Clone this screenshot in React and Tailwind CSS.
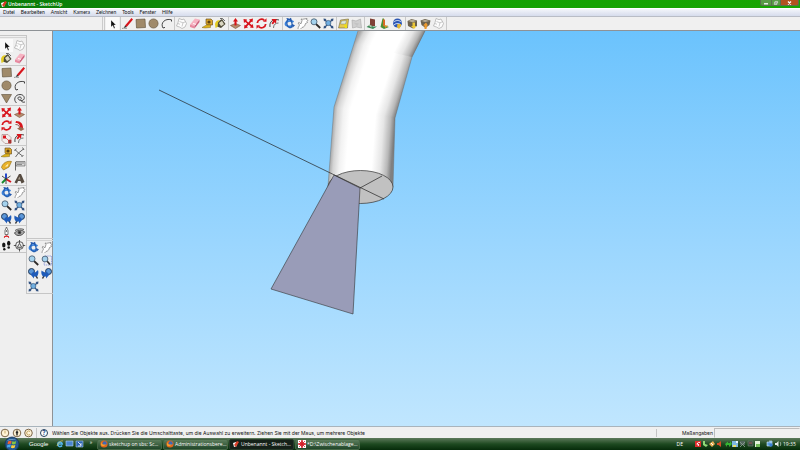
const TAN = "#a08a6a";
const RED = "#d8151c";

// every glyph is drawn on a 13 x 13 grid
const glyphs = {
  select: <path d="M5 3v7l1.700-1.500L8 11.500l1.100-.5-1.300-3H10z" fill="#111" stroke="#fff" strokeWidth=".3" />,
  component: (
    <g fill="#fcfcfc" stroke="#a9a9a9" strokeWidth=".7">
      <path d="M4 1.500l3 1.200L9 2l2.500 4.500L10 10l-3 1.500L4.500 10l-3-1L3 5.500z" />
      <path d="M4.500 4.500L8 5.800 7 9.500M8 5.800l2.500-1M3 6.500l2 .8" fill="none" strokeWidth=".6" />
    </g>
  ),
  eraser: (
    <g>
      <path d="M2 7.500L7 1.500l4.500 1L6.500 9z" fill="#f7b3c2" />
      <path d="M2 7.500L6.500 9v2.500L2 10z" fill="#e88aa0" />
      <path d="M6.500 9l5-6.500V5l-5 6.500z" fill="#cf5f7c" />
      <path d="M5 6.500l3 .8" stroke="#fff" strokeWidth=".9" />
    </g>
  ),
  paint: (
    <g>
      <path d="M3.500 5L8 2l3.500 5-4.500 4-4-1.500z" fill="#4d4a38" />
      <path d="M5 6l3-2.200 2 3.400-3 2z" fill="#dcd8c4" />
      <path d="M1 7c.5-3 3-4.500 5-3.500L4 5.500 3.500 10 1.500 11z" fill="#e3cb22" />
      <path d="M6 1.500h2.500L11 4" fill="none" stroke="#333" strokeWidth=".7" />
    </g>
  ),
  rect: <path d="M2 2.500l9-.5.5 8.500-9 .5z" fill={TAN} stroke="#5b4d38" strokeWidth=".6" />,
  pencil: (
    <g>
      <path d="M4 8.500L10.500 1 12 2.500 5.700 10z" fill={RED} />
      <path d="M4 8.500L5.700 10 3 11z" fill="#222" />
      <path d="M1 11.500c2-1 3 .5 5-.3" stroke="#555" strokeWidth=".6" fill="none" />
    </g>
  ),
  circle: <circle cx="6.500" cy="6.500" r="4.600" fill={TAN} stroke="#5b4d38" strokeWidth=".6" />,
  arc: <path d="M3 11C0 6 5 1 11.500 2.800M3 11l2-.6M11.500 2.800V4.500" fill="none" stroke="#333" strokeWidth=".9" />,
  polygon: <path d="M1.500 2.500h10L6.500 11z" fill={TAN} stroke="#5b4d38" strokeWidth=".6" />,
  freehand: (
    <path
      d="M3.500 11C0 8 2 2.500 7 2.500s5.500 5.500 2 6-5.500-3-3-3.500 3 2 1.500 2.500M8.500 9c1 2 2 1 3.500 1"
      fill="none"
      stroke="#333"
      strokeWidth=".9"
    />
  ),
  move: (
    <g fill={RED}>
      <path d="M1.500 2l3.500.5L4.500 4l2 1.500 1.500-2L7 2.500 11 1.500l-.5 3.800-1.300-.6L7.800 6.500l2 1.500 1-1L11.500 11 8 10.500l.7-1.300L6.500 7.800 5 9.500l1 1-4 1 .5-3.800 1.300.6L5.200 6.500l-2-1.500-1.200 1z" />
    </g>
  ),
  pushpull: (
    <g>
      <path d="M1.500 8.500L6.500 6.500l5 2-5 3z" fill="#b58e6c" stroke="#7a4a38" strokeWidth=".6" />
      <path d="M6.500 1L9 4.500H7.500v4h-2v-4H4z" fill={RED} />
    </g>
  ),
  rotate: (
    <g fill="none" stroke={RED} strokeWidth="1.800">
      <path d="M2.300 6a4.200 4.200 0 0 1 7-2.700M10.700 7a4.200 4.200 0 0 1-7 2.700" />
      <path d="M8 4.800h3.500V1.300zM5 8.200H1.500v3.500z" fill={RED} stroke="none" />
    </g>
  ),
  follow: (
    <g>
      <path d="M3 2c5 0 7 3 7 7H7c0-3-1-5-4.500-5z" fill={RED} />
      <path d="M2.500 5.500c3 0 4 1.500 4 3.500" fill="none" stroke="#7a3328" strokeWidth=".8" />
      <path d="M4 9.500l4-1.500 3.500 2-3.500 2z" fill="#9b6a50" />
    </g>
  ),
  scale: (
    <g>
      <path d="M2 2.500h6l3 3v6H5l-3-3z" fill="#f2eeec" stroke="#9d7a74" strokeWidth=".6" />
      <path d="M3 3.500h3v3H3z" fill={RED} />
      <path d="M8.500 8H11v3H8.500zM6 6l2.500 2.500" fill="#7e4a3e" stroke={RED} strokeWidth=".6" />
    </g>
  ),
  offset: (
    <g fill="none">
      <path d="M2 10C1 4 6 1.500 11 3" stroke="#333" strokeWidth=".9" />
      <path d="M5.500 11c0-3.500 2-5 5-5" stroke="#555" strokeWidth=".8" />
      <path d="M3.500 2l5 0-.5 4.500-1.500-1.200L5 7.500 3.500 6.200l1.500-2z" fill={RED} />
    </g>
  ),
  tape: (
    <g>
      <path d="M5 2h5l1.500 1.500V8H6L5 6.500z" fill="#dba62a" stroke="#5c4213" strokeWidth=".6" />
      <circle cx="8" cy="5" r="1.600" fill="#5c4213" />
      <path d="M1 10.500L5.500 8h4v2.500L4 11z" fill="#dfb31b" stroke="#66500f" strokeWidth=".4" />
    </g>
  ),
  dimension: (
    <path d="M2 3.500L5.500 7l5-4M2.500 11l3-4 4 3M9.500 1.500L11 4M3.500 2.500L1.500 5M8.500 11l2-2" fill="none" stroke="#444" strokeWidth=".8" />
  ),
  protractor: (
    <g>
      <path d="M1.500 8.500C2.500 4 7 1.500 11.500 2.500L9 8l-5.500 3z" fill="#eab229" stroke="#8a6814" strokeWidth=".6" />
      <path d="M5 7.500L8.500 4.500l-1 3z" fill="#fff3c2" />
    </g>
  ),
  text: (
    <g>
      <path d="M3 2.500h9v4.500H3z" fill="#d9d9d9" stroke="#555" strokeWidth=".6" />
      <path d="M4 4h7M4 5.500h5" stroke="#555" strokeWidth=".6" />
      <path d="M2.500 3v8.500" stroke="#444" strokeWidth=".8" />
    </g>
  ),
  axes: (
    <g fill="none" strokeWidth="1.900">
      <path d="M6 7V1.500" stroke="#1c40c8" />
      <path d="M6 7l5 3" stroke={RED} />
      <path d="M6 7l-4 4" stroke="#168a2a" />
      <path d="M6 7l4.500-3M6 7v5M2 4l4 3" stroke="#333" strokeWidth=".9" />
    </g>
  ),
  text3d: (
    <g>
      <path d="M1.500 10.500L6 2h2l3.500 8-3 1.500L7.500 9H5l-1 2.500z" fill="#564b40" />
      <path d="M6.500 4.500l1 3H5z" fill="#a89d8d" />
    </g>
  ),
  orbit: (
    <g fill="none">
      <path d="M10.500 5C8 3 3 4 2.500 6.500s4 3.500 7 2.300" stroke="#3a82dc" strokeWidth="1.700" />
      <path d="M5 2c-2 3-1.500 7.500 1.500 8.500S10 6 7.500 3" stroke="#2560b4" strokeWidth="1.400" />
      <path d="M5 2.500L8 .8 9 4zM9 7l3 1.200-2.500 2.500zM3 1.500L5.500 1 6 3.500z" fill="#2258ad" />
    </g>
  ),
  pan: (
    <path
      d="M2 12c0-2 1-2.500 1.500-4L2 6l1-.5 2 1.300L6 3.500 5 2l1.500.3L8 2l3-.5-.5 1L12 3.500l-1 1 .5 1-2 1C9 9 8 10 6 10.500L4.500 12"
      fill="#fff"
      stroke="#777"
      strokeWidth=".7"
    />
  ),
  zoom: (
    <g>
      <path d="M7 7l4.200 4" stroke="#2d2a28" strokeWidth="1.800" />
      <circle cx="5" cy="4.800" r="3" fill="#a4d2ed" stroke="#40546a" strokeWidth=".8" />
    </g>
  ),
  zoomWindow: (
    <g>
      <path d="M5 2h6.500v9H4z" fill="none" stroke="#5c6fd0" strokeWidth=".6" strokeDasharray="1.500 .7" />
      <path d="M7 7l3 3.500" stroke="#2d2a28" strokeWidth="1.700" />
      <circle cx="5" cy="5" r="2.900" fill="#a4d2ed" stroke="#40546a" strokeWidth=".8" />
    </g>
  ),
  extents: (
    <g>
      <path d="M1.500 1.500l3 .5L2 4.500zM11.500 1.500l-3 .5L11 4.500zM1.500 11.500l.5-3L4.500 11zM11.500 11.500l-3-.5L11 8.500z" fill="#2f5080" />
      <path d="M2.500 2.500l8 8M10.500 2.500l-8 8" stroke="#2f5080" strokeWidth="1.300" />
      <circle cx="6.300" cy="6" r="2.600" fill="#6faee2" stroke="#3d5d7c" strokeWidth=".7" />
    </g>
  ),
  previous: (
    <g>
      <path d="M8.500 8l2 3.500" stroke="#333" strokeWidth="1.500" />
      <circle cx="4.500" cy="4.500" r="3" fill="#5c97d8" stroke="#223a58" strokeWidth="1" />
      <path d="M3.500 7.500L7 4v2c2-1 3-2 4-3 1 3 0 5-1 6.500H7v2z" fill="#1f5cba" />
    </g>
  ),
  next: (
    <g>
      <path d="M4.500 8l-2 3.500" stroke="#333" strokeWidth="1.500" />
      <circle cx="8.500" cy="4.500" r="3" fill="#5c97d8" stroke="#223a58" strokeWidth="1" />
      <path d="M9.500 7.500L6 4v2C4 5 3 4.500 1.500 3.500c-.5 3 0 4.500 1.500 6h3v2z" fill="#1f5cba" />
    </g>
  ),
  camera: (
    <g>
      <path d="M6.500 1L5 4.500v4h3v-4z" fill="#fff" stroke="#444" strokeWidth=".7" />
      <circle cx="6.500" cy="5" r=".8" fill="#333" />
      <path d="M4 12l2.500-3L9 12M4 10.500h5" fill="none" stroke={RED} strokeWidth=".8" />
    </g>
  ),
  look: (
    <g fill="none" stroke="#444" strokeWidth=".9">
      <path d="M1.500 7c2-3 8-4 10-1-2 4-8 5-10 1z" fill="#a9a9a9" />
      <path d="M2 4.500c3-2 6-2 9-1" />
      <circle cx="6.500" cy="6.500" r="1.300" fill="#222" />
    </g>
  ),
  walk: (
    <g fill="#151515">
      <ellipse cx="3.800" cy="6" rx="1.700" ry="2.500" />
      <circle cx="4.300" cy="10.200" r="1.200" />
      <ellipse cx="8.700" cy="4.200" rx="1.700" ry="2.500" />
      <circle cx="8.700" cy="8.500" r="1.300" />
    </g>
  ),
  section: (
    <g fill="none" stroke="#333" strokeWidth=".8">
      <circle cx="6.500" cy="6.500" r="3.900" />
      <path d="M6.500 1v3M6.500 9.500v3M.8 6.500h2.500M9.700 6.500h2.500M4.300 8.300l2.200-4 2.200 4z" />
    </g>
  ),
  getView: (
    <g>
      <path d="M3.500 3l8-1-1 9h-9z" fill="#e6cb4e" stroke="#6b6344" strokeWidth=".6" />
      <path d="M4.500 4l5-.5-1 3.500h-5z" fill="#dde9da" stroke="#666" strokeWidth=".4" />
      <path d="M7 7.500h3V11H8z" fill="#eee012" />
    </g>
  ),
  terrain: (
    <g>
      <path d="M2 3l4 1 4.500-2 1 9-5-1-4 1z" fill="#cfcfcf" stroke="#a6a6a6" strokeWidth=".6" />
      <path d="M3.500 5.500l5.500 1-2 2.500z" fill="#c4c4c4" />
    </g>
  ),
  place: (
    <g>
      <path d="M5 1.500l5 1v6.500H5z" fill="#7f4036" />
      <path d="M1.500 10l3.500-2.500 3 2h4l-4 2.500z" fill="#3d8a58" />
      <path d="M3 8l3.500.5v2z" fill="#d9d1c3" />
    </g>
  ),
  share: (
    <g>
      <path d="M4.500 1.500H6V8l5 2-5 2-3.500-2z" fill="#4a8f35" />
      <path d="M5 2.500h2v6l-2 1z" fill="#d86a24" />
      <path d="M6 8.500h4l-2.500 2.500z" fill="#e98b25" />
    </g>
  ),
  earth: (
    <g>
      <circle cx="6.500" cy="6" r="4.500" fill="#2e58b4" />
      <path d="M2.500 5c3-2 5-2 8 0M3 8c2-2 5-2 7 0" fill="none" stroke="#e5edf9" strokeWidth="1" />
      <path d="M6.500 7h3.500v2L8 12 6 10z" fill="#e4b730" />
    </g>
  ),
  download: (
    <g>
      <path d="M1.500 4l4-2 5.500 1.500V9l-4 2.500L2 9z" fill="#6b614f" />
      <path d="M2 4l4.500 1.200L10.500 4 6 2.500z" fill="#b7ad97" />
      <path d="M6.500 5.500h2.500v3.500h1.500L8 12 5 9h1.500z" fill="#ecc838" />
    </g>
  ),
  upload: (
    <g>
      <path d="M1.500 3.500l4.500-1.500 5.500 1.500-1 4.500-4 3-4-3z" fill="#6b614f" />
      <path d="M2.500 4l3.500 1 4.500-1L6 2.800z" fill="#b7ad97" />
      <path d="M5.500 12V8.500H4l3-3 2 3H8l-.5 3.500z" fill="#ed9a2d" />
    </g>
  ),
};

function Tool({ name, active }) {
  return (
    <button
      type="button"
      aria-label={name}
      className={`size-[13px] shrink-0 ${active ? "bg-[#fafafa]" : ""}`}
    >
      <svg viewBox="0 0 13 13" className="size-full">
        {glyphs[name]}
      </svg>
    </button>
  );
}

const topGroups = [
  ["select"],
  ["pencil", "rect", "circle", "arc"],
  ["component", "eraser", "tape", "paint"],
  ["pushpull", "move", "rotate", "offset"],
  ["orbit", "pan", "zoom", "extents"],
  ["getView", "terrain"],
  ["place", "share", "earth"],
  ["download", "upload", "component"],
];

const sideGroups = [
  ["select", "component", "paint", "eraser"],
  ["rect", "pencil", "circle", "arc", "polygon", "freehand"],
  ["move", "pushpull", "rotate", "follow", "scale", "offset"],
  ["tape", "dimension", "protractor", "text", "axes", "text3d"],
  ["orbit", "pan", "zoom", "extents", "previous", "next"],
  ["camera", "look", "walk", "section"],
];

const viewTools = ["orbit", "pan", "zoom", "zoomWindow", "previous", "next", "extents"];

const menus = ["Datei", "Bearbeiten", "Ansicht", "Kamera", "Zeichnen", "Tools", "Fenster", "Hilfe"];

function TitleBar() {
  return (
    <header className="flex h-2 shrink-0 items-center bg-linear-to-r from-[#087a08] via-[#12a004] to-[#18a602] text-white">
      <svg viewBox="0 0 8 8" className="size-2">
        <path d="M1 3l3-1 1 4-3 1z" fill="#fff" />
        <path d="M2 5l3-4 2 1-3 5z" fill="#d83a24" />
      </svg>
      <h1 className="text-[5px] leading-2 font-semibold">Unbenannt - SketchUp</h1>
      <div className="mr-px ml-auto flex h-[6px] self-start overflow-hidden rounded-b-xs border border-t-0 border-[#59704d]">
        <button type="button" aria-label="Minimieren" className="w-[10px] bg-[#5b9b48]">
          <svg viewBox="0 0 10 6" className="h-[6px] w-full"><path d="M3 3h4v1.500H3z" fill="#e8efe6" /></svg>
        </button>
        <button type="button" aria-label="Verkleinern" className="w-[10px] border-x border-[#59704d] bg-[#5b9b48]">
          <svg viewBox="0 0 10 6" className="h-[6px] w-full"><path d="M4 1h3v2H6v2H3V2h1z" fill="#9eae97" stroke="#e8efe6" strokeWidth=".7" /></svg>
        </button>
        <button type="button" aria-label="Schließen" className="w-[17px] bg-[#b3521f]">
          <svg viewBox="0 0 17 6" className="h-[6px] w-full"><path d="M7 1.500l3 3M10 1.500l-3 3" stroke="#fff" strokeWidth="1.200" /></svg>
        </button>
      </div>
    </header>
  );
}

function SideBar() {
  return (
    <aside className="flex w-[53px] shrink-0 border-r border-[#8e9296] bg-[#efefef]">
      <div className="mt-1 self-start border-y border-r border-[#c6c6c6]">
        <div className="mt-px mb-px h-px bg-[#d4d4d4]" />
        {sideGroups.map((group, i) => (
          <div key={i} className="grid grid-cols-[13px_13px] border-b border-[#c9c9c9] last:border-b-0">
            {group.map((name) => (
              <Tool key={name} name={name} active={name === "select"} />
            ))}
          </div>
        ))}
      </div>
      <div className="mt-[207px] -ml-px self-start border-y border-l border-[#c6c6c6]">
        <div className="mt-px h-px bg-[#d4d4d4]" />
        <div className="grid grid-cols-[13px_13px]">
          {viewTools.map((name) => (
            <Tool key={name} name={name} />
          ))}
        </div>
      </div>
    </aside>
  );
}

// shading across the pipe, shared by its three sections
function PipeShade({ id, x1, y1, x2, y2 }) {
  return (
    <linearGradient id={id} gradientUnits="userSpaceOnUse" x1={x1} y1={y1} x2={x2} y2={y2}>
      <stop offset="0" stopColor="#a8a8a8" />
      <stop offset=".06" stopColor="#d4d4d4" />
      <stop offset=".16" stopColor="#f2f2f2" />
      <stop offset=".27" stopColor="#fff" />
      <stop offset=".68" stopColor="#fff" />
      <stop offset=".82" stopColor="#e6e6e6" />
      <stop offset=".93" stopColor="#b8b8b8" />
      <stop offset="1" stopColor="#808080" />
    </linearGradient>
  );
}

function Model() {
  return (
    <main className="min-w-0 flex-1 bg-linear-to-b from-[#6bc3fd] to-[#c0e6fe]">
      <svg viewBox="53 31 747 395" preserveAspectRatio="xMidYMin slice" className="size-full">
        <defs>
          <PipeShade id="lower" x1="334" y1="107" x2="395.500" y2="111.700" />
          <PipeShade id="upper" x1="334" y1="107" x2="392.600" y2="125.500" />
          <PipeShade id="bend" x1="354" y1="44" x2="405.600" y2="69.800" />
        </defs>
        {/* each section runs a little under the next one */}
        <path d="M358 31H425L412 57 395 118V121L334 110V107z" fill="url(#upper)" />
        <path d="M358 31H425L412 57 354 44z" fill="url(#bend)" />
        <path d="M334 107L395 118 393 187 328 186z" fill="url(#lower)" />
        <path d="M358 31L334 107 328 186M425 31L412 57 395 118 393 187" fill="none" stroke="#666" strokeWidth=".4" />
        <ellipse cx="360.500" cy="187" rx="32.500" ry="16.500" fill="#c1c1c1" stroke="#333" strokeWidth=".7" />
        <path d="M334 175L360 188 353 314 271 289z" fill="#999cb8" stroke="#333" strokeWidth=".6" />
        <path d="M159 90L384 199M360 188L382 176" fill="none" stroke="#222" strokeWidth=".7" />
      </svg>
    </main>
  );
}

function StatusBar() {
  return (
    <footer className="flex h-[12px] shrink-0 items-center border-t border-[#a9b4bc] bg-[#f0f0f0] font-['Inter',sans-serif] text-[5px] leading-2 text-[#111]">
      <svg viewBox="0 0 36 10" className="h-[10px] w-9 shrink-0">
        <g fill="#fff3d6" stroke="#6d5638" strokeWidth=".9">
          <circle cx="5" cy="5" r="3.800" />
          <circle cx="17" cy="5" r="3.800" />
          <circle cx="28.500" cy="5" r="3.800" />
        </g>
        <path d="M5 2.500v3" stroke="#d8c08c" strokeWidth="1.400" />
        <path d="M17 2.500v5M15.800 4.500h2.400" stroke="#222" strokeWidth="1.400" />
        <path d="M30 3.500a2 2 0 1 0 0 3" fill="none" stroke="#c3a467" strokeWidth="1" />
      </svg>
      <div className="flex h-[10px] min-w-0 flex-1 items-center gap-1 border-l border-[#c4c4c4] pl-[3px]">
        <button
          type="button"
          aria-label="Hilfe"
          className="flex size-2 shrink-0 items-center justify-center rounded-full border border-[#25405e] bg-white text-[6px] leading-none font-bold text-[#1c4a82]"
        >
          ?
        </button>
        <p className="truncate">
          Wählen Sie Objekte aus. Drücken Sie die Umschalttaste, um die Auswahl zu erweitern. Ziehen Sie mit der Maus, um mehrere Objekte
        </p>
      </div>
      <label htmlFor="measure" className="w-[58px] border-l border-[#c4c4c4] pr-px text-right">
        Maßangaben
      </label>
      <input id="measure" className="h-[10px] w-[86px] border border-[#bcbcbc] border-r-transparent border-b-transparent bg-[#f0f0f0]" />
    </footer>
  );
}

function Fox() {
  return (
    <svg viewBox="0 0 8 8" className="size-2 shrink-0">
      <circle cx="4" cy="4" r="3.600" fill="#e2661b" />
      <circle cx="4.600" cy="3.200" r="2" fill="#3f68b5" />
      <path d="M1 2c1 3 3 3 5 2-1 2-4 3-5 1z" fill="#f4a12c" />
    </svg>
  );
}

const tasks = [
  { label: "sketchup on sbs: Sc...", icon: <Fox /> },
  { label: "Administrationsbere...", icon: <Fox /> },
  {
    label: "Unbenannt - Sketch...",
    active: true,
    icon: (
      <svg viewBox="0 0 8 8" className="size-2 shrink-0">
        <path d="M1 3l3-1 1 4-3 1z" fill="#fff" />
        <path d="M2 5l3-4 2 1-3 5z" fill="#d8402a" />
      </svg>
    ),
  },
  {
    label: "*D:\\Zwischenablage...",
    icon: (
      <svg viewBox="0 0 8 8" className="size-2 shrink-0">
        <path d="M0 0h8v8H0z" fill="#fff" />
        <path d="M4 0l1 3 3 1-3 1-1 3-1-3-3-1 3-1zM1 1l6 6M7 1L1 7" fill="#d4202a" stroke="#d4202a" strokeWidth=".8" />
      </svg>
    ),
  },
];

function Tray() {
  return (
    <svg viewBox="694 0 88 12" className="h-[12px] w-[88px] shrink-0">
      <path d="M695 3h6v6h-6z" fill="#dc2c2c" />
      <path d="M700 4.500c-3-1-4 3-1 3M697 5l2 2" fill="none" stroke="#fff" strokeWidth=".9" />
      <path d="M703 3h2v3l3 1-2 2-3-2z" fill="#90d978" />
      <path d="M709 6l4-3 2 3-3 3z" fill="#e5af55" />
      <path d="M711 5l2 2" stroke="#fff" />
      <path d="M717 5h1.500L721 3v6l-2.500-2H717z" fill="#d54c26" />
      <path d="M725 6l3-2.500V5h2V3l2 3-3 3V7h-2v2z" fill="#35b633" />
      <path d="M732 3h6v6h-6z" fill="#7db9df" />
      <path d="M733 7h3v2h-3z" fill="#e6df69" />
      <path d="M736 3h2v2h-2z" fill="#e6f6ff" />
      <path d="M740 3h5v4h-5z" fill="#52665c" />
      <path d="M740 4l5 5M745 4l-5 5" stroke="#8fa396" strokeWidth=".8" />
      <path d="M748 3h5v5h-5z" fill="#3c4a42" stroke="#6f8474" strokeWidth=".6" />
      <path d="M749 5h3" stroke="#a5605c" />
      <path d="M755 3h5v4l-2 2h-3z" fill="#e2f2d9" />
      <path d="M756 6h4v3h-4z" fill="#73bd58" />
      <path d="M767 4h4v4h-4zM769 3h3v4" fill="#5b9ddb" stroke="#d8ecfa" strokeWidth=".6" />
      <circle cx="771" cy="7" r="1.700" fill="#3a7fd0" />
      <path d="M775 5h1.500L778.500 3v6l-2-2H775z" fill="#e7ebe7" />
      <path d="M780 4c1 1 1 3 0 4" fill="none" stroke="#b4c5b8" strokeWidth=".8" />
    </svg>
  );
}

function TaskBar() {
  return (
    <nav className="flex h-[12px] shrink-0 items-center bg-linear-to-b from-[#5d7a5c] via-[#1e4a21] to-[#062b0a] text-[5px] leading-2 text-white">
      <button type="button" aria-label="Start" className="ml-1 size-[16px] shrink-0">
        <svg viewBox="0 0 16 16" className="size-full">
          <circle cx="8" cy="8" r="7" fill="#24578f" stroke="#163250" strokeWidth=".8" />
          <path d="M2.500 5a7 5 0 0 1 11 0c-4-2-7-1-11 0z" fill="#8cb9dc" />
          <path d="M4 5.500c1.500-1 2.500-.8 3.600-.3L7 8c-1-.5-2-.5-3.500.3z" fill="#ee6230" />
          <path d="M8.300 5.300c1.400.6 2.600.5 3.900-.2L11.500 8c-1.400.6-2.400.6-3.700.1z" fill="#85c440" />
          <path d="M3.300 9c1.400-.7 2.500-.7 3.600-.2l-.7 2.800c-1-.5-2-.4-3.300.1z" fill="#4aa8e8" />
          <path d="M7.600 9c1.400.6 2.500.5 3.700-.1l-.7 2.800c-1.400.6-2.500.6-3.700.1z" fill="#fcce3b" />
        </svg>
      </button>
      <a href="#google" className="ml-[9px] w-[26px] font-['Liberation_Sans',sans-serif] text-[6px]">Google</a>
      <svg viewBox="0 0 30 12" className="h-[12px] w-[30px] shrink-0">
        <path d="M7 7.500a2.300 2.300 0 1 1 .3-1.500H3" fill="none" stroke="#54b5ee" strokeWidth="1.500" />
        <path d="M2 8C3 5 6 2 8 3" fill="none" stroke="#ecc445" strokeWidth=".7" />
        <path d="M11 3h7v5h-7z" fill="#4a86cf" stroke="#b5d3ed" strokeWidth=".6" />
        <path d="M21 3h7v6h-7z" fill="#2d66b4" stroke="#a9c7e4" strokeWidth=".6" />
        <path d="M23 4l3 3M26 5v3h-3" stroke="#fff" strokeWidth=".8" fill="none" />
      </svg>
      <span className="w-3 self-start text-center">»</span>
      <div className="flex gap-px">
        {tasks.map((task) => (
          <button
            key={task.label}
            type="button"
            className={`flex h-[11px] w-[65px] items-center gap-px rounded-xs border pl-[2px] whitespace-nowrap ${
              task.active ? "border-[#273a2a] bg-[#152119]" : "border-[#456645] bg-linear-to-b from-[#5c7d5c] to-[#20462a]"
            }`}
          >
            {task.icon}
            {task.label}
          </button>
        ))}
      </div>
      <span className="mr-[11px] ml-auto">DE</span>
      <Tray />
      <time className="w-[18px] pl-px">19:35</time>
    </nav>
  );
}

export default function App() {
  return (
    <div className="flex h-screen flex-col overflow-hidden bg-[#f0f0f0] font-['Open_Sans',sans-serif]">
      <TitleBar />
      <nav className="flex h-[9px] shrink-0 items-center gap-[6px] border-t border-b border-t-white border-b-[#b9bdc6] bg-linear-to-b from-[#f4f6fb] to-[#d6dcec] pl-[3px] font-['Lato',sans-serif] text-[5px] leading-[7px] text-[#111]">
        {menus.map((menu) => (
          <button key={menu} type="button">{menu}</button>
        ))}
      </nav>
      <div className="flex h-[14px] shrink-0 border-b border-[#8e9296] bg-[#f0f0f0] pl-[102px]">
        <div className="mr-px w-[3px] border-x border-[#cbcbcb]" />
        {topGroups.map((group, i) => (
          <div key={i} className="flex border-r border-[#c9c9c9] pr-px">
            {group.map((name) => (
              <Tool key={name} name={name} active={name === "select"} />
            ))}
          </div>
        ))}
      </div>
      <div className="flex min-h-0 flex-1">
        <SideBar />
        <Model />
      </div>
      <StatusBar />
      <TaskBar />
    </div>
  );
}
